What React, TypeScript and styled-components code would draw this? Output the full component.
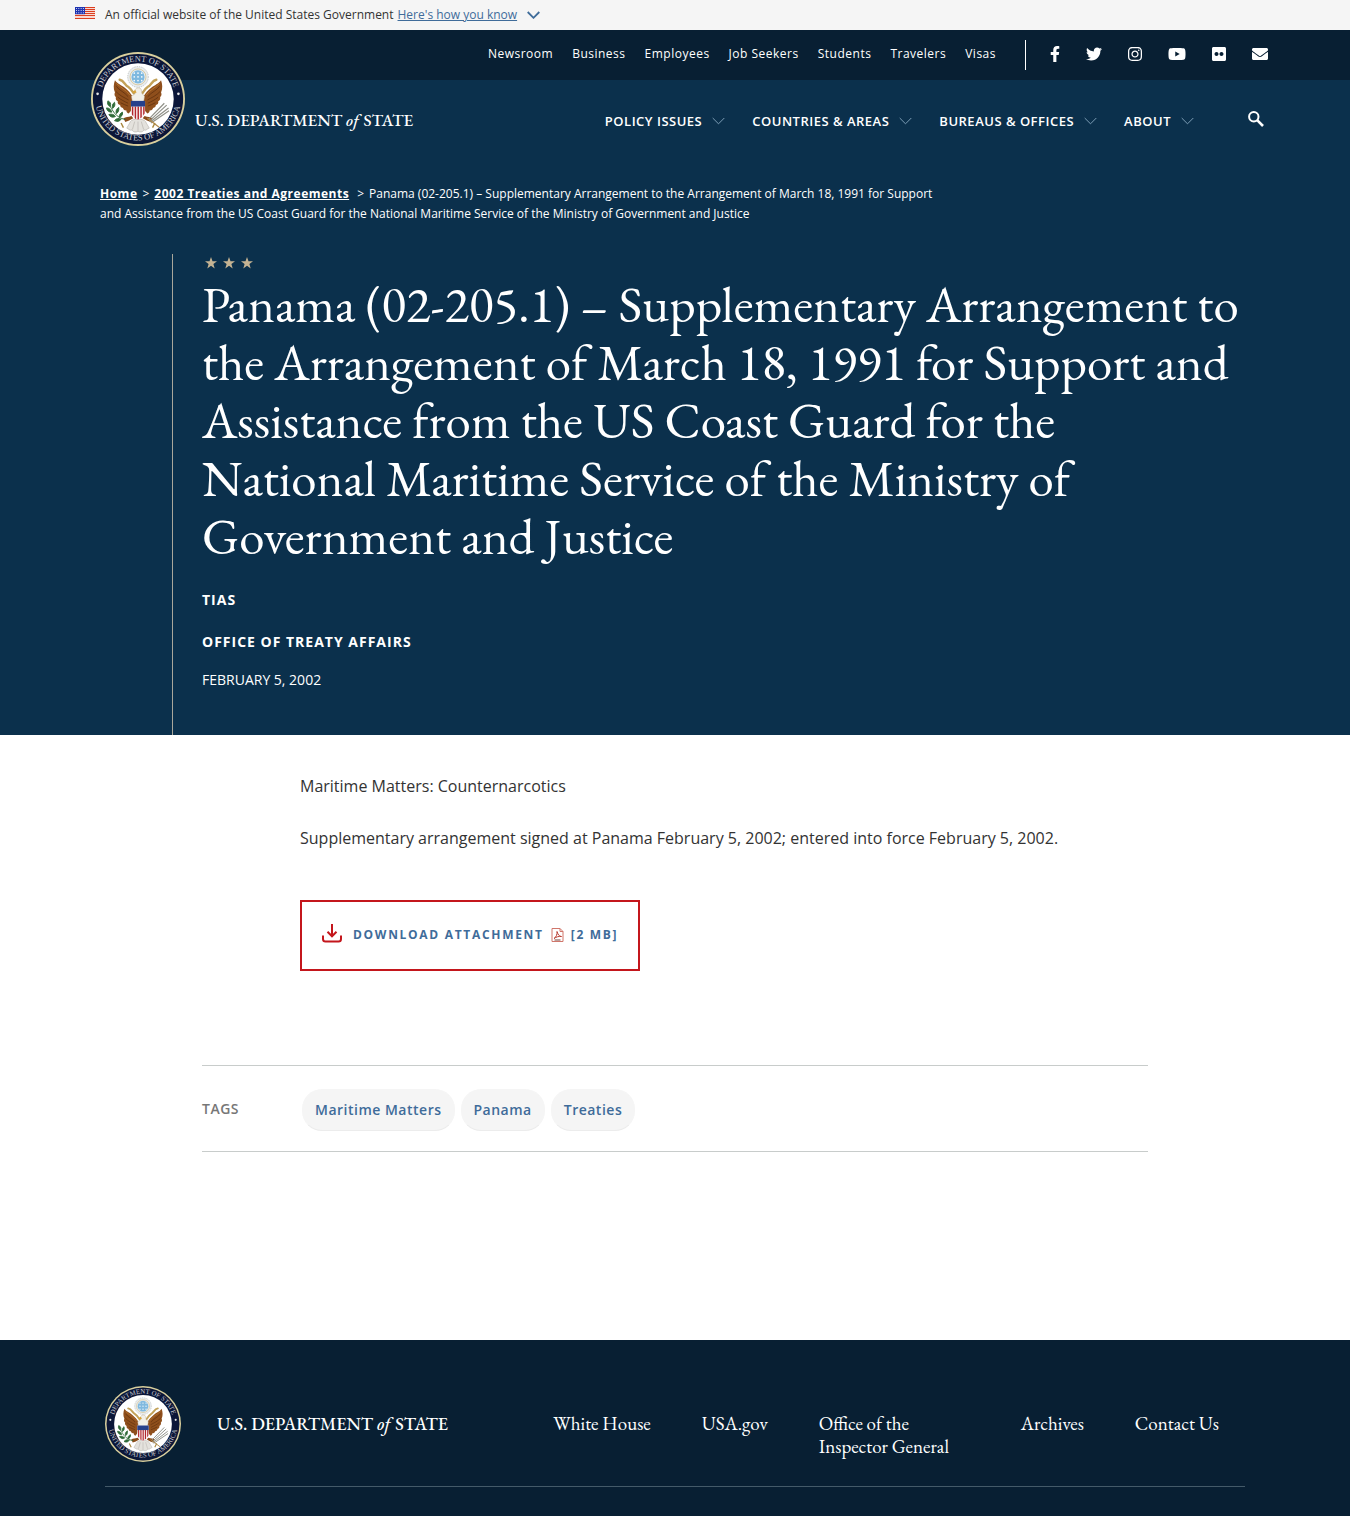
import React from "react";
import styled, { createGlobalStyle } from "styled-components";
import { FaEnvelope, FaFacebookF, FaFlickr, FaInstagram, FaTwitter, FaYoutube } from "react-icons/fa";

const sans = `"Open Sans", "Noto Sans", sans-serif`;
const serif = `"EB Garamond", "Liberation Serif", serif`;
const navy = "#081f33";
const blue = "#0b304c";
const link = "#3f6c9a";
const red = "#c4161c";

const GlobalStyle = createGlobalStyle`
  *, *::before, *::after { box-sizing: border-box; }
  body {
    margin: 0;
    background: #fff;
    color: #333;
    font-family: ${sans};
    font-size: 16px;
  }
  a { color: inherit; text-decoration: none; }
  button { font: inherit; color: inherit; background: none; border: 0; padding: 0; cursor: pointer; }
  ul, ol { list-style: none; margin: 0; padding: 0; }
  svg { display: block; flex-shrink: 0; }
`;

const Container = styled.div<{ $max: number }>`
  width: 100%;
  max-width: ${(p) => p.$max}px;
  margin: 0 auto;
`;

const Banner = styled.div`
  background: #f5f5f5;
`;

const BannerRow = styled(Container)`
  display: flex;
  align-items: center;
  min-height: 30px;
  gap: 10px;
  font-size: 12px;
  line-height: 30px;
`;

const FlagBox = styled.span`
  padding-bottom: 4px;
`;

const BannerButton = styled.button`
  display: inline-flex;
  align-items: center;
  gap: 10px;
  margin-left: -6px;
  color: ${link};

  span { text-decoration: underline; }
`;

const Header = styled.header`
  background: linear-gradient(${navy} 50px, ${blue} 50px);
  color: #fff;
`;

const HeaderRow = styled(Container)`
  display: flex;
  justify-content: space-between;
  min-height: 140px;
  padding: 0 7px 0 16px;
`;

const Brand = styled.a`
  display: flex;
  align-items: flex-start;
  gap: 10px;
  padding-top: 22px;
`;

const BrandName = styled.span<{ $size: number; $top: number }>`
  padding-top: ${(p) => p.$top}px;
  font-family: ${serif};
  font-size: ${(p) => p.$size}px;
  font-weight: 500;
  line-height: 22px;
  white-space: nowrap;

  em { margin-right: 1px; }
`;

const Navs = styled.div`
  display: flex;
  flex-direction: column;
  align-items: flex-end;
`;

const UtilityBar = styled.div`
  display: flex;
  align-items: center;
  height: 50px;
`;

const UtilityNav = styled.ul`
  display: flex;
  gap: 19px;
  padding: 0 29px 3px 0;
  font-size: 12px;
  letter-spacing: 0.5px;
`;

const Social = styled.ul`
  display: flex;
  align-items: center;
  gap: 26px;
  height: 30px;
  padding-left: 24px;
  border-left: 1px solid #fff;
`;

const SocialItem = styled.li<{ $width: number }>`
  padding-bottom: 2px;

  svg {
    width: ${(p) => p.$width}px;
    height: 16px;
  }
`;

const MainNav = styled.nav`
  display: flex;
  align-items: center;
  gap: 27px;
  height: 81px;
`;

const NavButton = styled.button`
  display: flex;
  align-items: center;
  gap: 10px;
  font-size: 13px;
  font-weight: 600;
  letter-spacing: 0.5px;
  text-transform: uppercase;
  white-space: nowrap;
`;

const SearchButton = styled.button`
  margin: 0 4px 4px 27px;
`;

const Hero = styled.section`
  background: ${blue};
  color: #fff;
`;

const Breadcrumb = styled.nav`
  max-width: 890px;
  padding: 14px 25px 30px;
  font-size: 12px;
  line-height: 20px;

  ol, li { display: inline; }
  li + li::before { content: ">"; margin: 0 5px; }
  li:last-child::before { margin-left: 8px; }
  a { font-weight: 700; letter-spacing: 0.5px; text-decoration: underline; }
`;

const HeroBody = styled.div`
  margin-left: 97px;
  padding: 3px 30px 42px 29px;
  border-left: 1px solid #a9a79b;
`;

const Stars = styled.div`
  display: flex;
  gap: 6px;
  padding-left: 3px;
`;

const Title = styled.h1`
  margin: 6px 0 22px;
  font-family: ${serif};
  font-size: 51px;
  font-weight: 400;
  line-height: 58px;
`;

const Meta = styled.p<{ $strong?: boolean; $gap: number }>`
  margin: 0 0 ${(p) => p.$gap}px;
  font-size: 14px;
  line-height: 26px;
  font-weight: ${(p) => (p.$strong ? 700 : 400)};
  letter-spacing: ${(p) => (p.$strong ? "1px" : "normal")};
  text-transform: uppercase;
`;

const Content = styled(Container)`
  padding: 38px 0 0 98px;
`;

const Paragraph = styled.p`
  margin: 0 0 26px;
  line-height: 26px;
`;

const Download = styled.a`
  display: inline-flex;
  align-items: center;
  gap: 11px;
  min-height: 71px;
  margin: 23px 0 94px;
  padding: 0 20px;
  border: 2px solid ${red};
  color: ${link};
  font-size: 12px;
  font-weight: 700;
  letter-spacing: 1.7px;
  text-transform: uppercase;

  > svg { margin-bottom: 4px; }
`;

const DownloadText = styled.span`
  display: flex;
  align-items: center;
  gap: 7px;
  padding-bottom: 2px;
`;

const Tags = styled(Container)`
  display: flex;
  align-items: center;
  padding: 23px 0 20px;
  margin-bottom: 188px;
  border-top: 1px solid #c8cccb;
  border-bottom: 1px solid #c8cccb;
  font-size: 14px;
  font-weight: 600;
  letter-spacing: 0.5px;
`;

const TagsLabel = styled.h2`
  width: 100px;
  margin: 0;
  padding-bottom: 3px;
  color: #777;
  font-size: inherit;
  font-weight: inherit;
  text-transform: uppercase;
`;

const TagList = styled.ul`
  display: flex;
  flex-wrap: wrap;
  gap: 6px;
`;

const Tag = styled.a`
  display: block;
  padding: 0 12px;
  border-radius: 20px;
  border: 1px solid #f5f5f5;
  border-bottom-color: #ececec;
  background: #f5f5f5;
  color: ${link};
  line-height: 40px;
`;

const Footer = styled.footer`
  background: ${navy};
  color: #fff;
  padding: 46px 0 29px;
`;

const FooterRow = styled(Container)`
  display: flex;
  justify-content: space-between;
  padding: 0 26px 24px 0;
  border-bottom: 1px solid #445a69;
`;

const FooterBrand = styled(Brand)`
  padding: 0;
  gap: 36px;
`;

const FooterLinks = styled.ul`
  display: flex;
  gap: 51px;
  padding-top: 26px;
  font-family: ${serif};
  font-size: 19px;
  line-height: 23px;

  li { max-width: 151px; }
`;

const Chevron = ({ color, stroke }: { color: string; stroke: number }) => (
  <svg width="13" height="8" viewBox="0 0 13 8" fill="none" stroke={color} strokeWidth={stroke} aria-hidden="true">
    <path d="M.7 1l5.8 5.8L12.300 1" />
  </svg>
);

const SearchIcon = () => (
  <svg width="16" height="16" viewBox="0 0 16 16" fill="none" stroke="#fff" aria-hidden="true">
    <circle cx="5.800" cy="5.800" r="4.700" strokeWidth="2" />
    <path d="M9.200 9.200l5.800 5.800" strokeWidth="2.600" />
  </svg>
);

const Flag = () => (
  <svg width="20" height="12" viewBox="0 0 20 12" aria-hidden="true">
    <rect width="20" height="12" fill="#fff" />
    {[0, 2, 4, 6, 8, 10.8].map((y) => (
      <rect key={y} y={y} width="20" height="1.2" fill="#db3e1f" />
    ))}
    <rect width="10" height="7.200" fill="#1e33b1" />
    {[1.5, 3.6, 5.7].map((y) =>
      [1.5, 3.8, 6.1, 8.4].map((x) => <circle key={`${x}-${y}`} cx={x} cy={y} r=".5" fill="#fff" />)
    )}
  </svg>
);

const Star = () => (
  <svg width="12" height="12" viewBox="0 0 12 12" fill="#c5b393" aria-hidden="true">
    <path d="M6 0l1.500 4.300H12L8.400 7l1.300 4.500L6 8.800l-3.700 2.700L3.600 7 0 4.300h4.500z" />
  </svg>
);

const Wing = () => (
  <g>
    <path
      d="M51 60c5 8 14 10 21 16 7 6 12 11 16 18l2 16c-1 8-4 15-10 21-3-1-5-4-5-7-3 1-6-1-7-5-4 0-6-3-6-6-4-1-6-4-5-8-4-2-5-5-4-9-3-3-4-6-2-10-4-8-3-18 0-26z"
      fill="#8f4f1c"
    />
    <path d="M54 73c6 9 17 12 25 22M53 84c8 9 18 13 27 18M57 96c7 6 14 9 22 13M63 108c6 3 10 5 16 7" stroke="#5d2f0e" strokeWidth="1.600" fill="none" />
    <path d="M54 67c8 8 20 13 29 25" stroke="#b9772f" strokeWidth="2" fill="none" />
  </g>
);

const Seal = ({ size, id }: { size: number; id: string }) => (
  <svg width={size} height={size} viewBox="0 0 200 200" role="img" aria-label="Seal of the Department of State">
    <defs>
      <path id={`${id}-top`} d="M20 100a80 80 0 0 1 160 0" />
      <path id={`${id}-bottom`} d="M8 92v4a92 92 0 0 0 184 0v-4" />
    </defs>
    <circle cx="100" cy="100" r="100" fill="#d9cf9d" />
    <circle cx="100" cy="100" r="96" fill="#0b1638" />
    <circle cx="100" cy="100" r="76" fill="#fff" />
    <g fill="#c9cbd0" fontFamily="Liberation Serif, serif" fontSize="18" textAnchor="middle">
      <text>
        <textPath href={`#${id}-top`} startOffset="50%">DEPARTMENT OF STATE</textPath>
      </text>
      <text>
        <textPath href={`#${id}-bottom`} startOffset="50%">UNITED STATES OF AMERICA</textPath>
      </text>
    </g>
    <circle cx="14" cy="89" r="2.800" fill="#e6e6e6" />
    <circle cx="186" cy="89" r="2.800" fill="#e6e6e6" />
    <Wing />
    <g transform="matrix(-1 0 0 1 200 0)">
      <Wing />
    </g>
    <g stroke="#c3a259" strokeWidth="5" fill="none" strokeLinecap="round">
      <path d="M61 59c10 2 10 11 18 15 5 3 8 8 12 14" />
      <path d="M139 59c-10 2-10 11-18 15-5 3-8 8-12 14" />
    </g>
    <circle cx="100" cy="53" r="22" fill="#e9ecef" stroke="#b4b8b2" strokeWidth="1.500" strokeDasharray="3 2" />
    <circle cx="100" cy="53" r="17" fill="none" stroke="#d2bf84" strokeWidth="1.500" />
    <circle cx="100" cy="53" r="14" fill="#7fb9df" />
    <g fill="#fff">
      {[45, 53, 61].map((y) => [92, 100, 108].map((x) => <circle key={`${x}-${y}`} cx={x} cy={y} r="1.700" />))}
    </g>
    <path d="M94 80c3-5 11-5 13 0l1 8 6 6-2 12H88l-2-12 8-5z" fill="#f1efe8" stroke="#b7a78b" />
    <path d="M94 81l-7 4 5 3 5-2z" fill="#d7a33a" />
    <path d="M86 136c-7 3-12 1-17 5l4 8 8-3 9-5zM114 136c7 3 12 1 17 5l-4 8-8-3-9-5z" fill="#8a4c1b" />
    <path d="M84 148c4-7 28-7 32 0l8 14c-5 1-6 6-11 4-4 5-8 5-13 3-5 2-9 2-13-3-5 2-7-3-11-4z" fill="#e4e2dd" stroke="#a5a09a" />
    <path d="M100 148v20M93 148l-5 17M107 148l5 17" stroke="#a5a09a" fill="none" />
    <path d="M85 104h30v23c0 9-8 14-15 17-7-3-15-8-15-17z" fill="#f7eeee" />
    <path d="M87 116v17l3 4v-21zM93 116v25l3 2v-27zM99 116v28l3-1v-27zM105 116v25l3-2v-23zM111 116v19l3-4v-15z" fill="#b3262c" />
    <path d="M85 104h30v12H85z" fill="#26408b" />
    <g stroke="#2f6b38" strokeWidth="2" fill="#2f6b38">
      <path d="M38 111c8 12 12 28 36 33" fill="none" />
      <path d="M36 104c5 2 7 6 5 12-5-2-7-6-5-12zM50 107c2 6 0 10-4 13-2-5 0-10 4-13zM33 119c6 0 10 4 11 9-6 0-10-3-11-9zM59 118c1 6-1 11-5 13-2-5 0-10 5-13zM38 133c6-2 11 0 14 4-5 3-11 2-14-4zM67 128c1 6-2 10-7 11 0-5 2-9 7-11zM50 146c4-5 9-6 14-3-3 5-9 6-14 3z" />
    </g>
    <g stroke="#8f9088" strokeWidth="2.500" fill="none">
      <path d="M124 147l37-34M126 149l39-30M128 151l38-26M123 143l33-34" />
      <path d="M120 141l25 19" stroke="#b08a4a" />
    </g>
    <path d="M64 151l5 10M136 151l-5 10" stroke="#a8863f" strokeWidth="3" />
  </svg>
);

const DownloadIcon = () => (
  <svg width="20" height="19" viewBox="0 0 20 19" fill="none" stroke={red} strokeWidth="2" aria-hidden="true">
    <path d="M10 0v12M5.500 7.800L10 12.300l4.500-4.500M1 11.500v3.500q0 2.500 2.500 2.500h13q2.500 0 2.500-2.500v-3.500" />
  </svg>
);

const PdfIcon = () => (
  <svg width="13" height="14" viewBox="0 0 13 14" fill="none" stroke="#d0766b" aria-hidden="true">
    <path d="M1 .5h8l3 3v10H1zM9 .5v3h3" />
    <path d="M3 10.500C5 9.500 6.500 6 6 3.500c1 3 2 5 4.500 5C8 8 5 9 3 10.500z" stroke="#b93b30" />
    <path d="M3.500 12h6" stroke="#7b4038" />
  </svg>
);

const utilityLinks = ["Newsroom", "Business", "Employees", "Job Seekers", "Students", "Travelers", "Visas"];
const mainLinks = ["Policy Issues", "Countries & Areas", "Bureaus & Offices", "About"];
const socialLinks = [
  { label: "Facebook", Icon: FaFacebookF, width: 10 },
  { label: "Twitter", Icon: FaTwitter, width: 16 },
  { label: "Instagram", Icon: FaInstagram, width: 14 },
  { label: "YouTube", Icon: FaYoutube, width: 18 },
  { label: "Flickr", Icon: FaFlickr, width: 14 },
  { label: "Email", Icon: FaEnvelope, width: 16 },
];
const tags = ["Maritime Matters", "Panama", "Treaties"];
const footerLinks = ["White House", "USA.gov", "Office of the Inspector General", "Archives", "Contact Us"];

// The name of the service stays on one line.
const title =
  "Panama (02-205.1) – Supplementary Arrangement to the Arrangement of March 18, 1991 for Support and Assistance from the US Coast Guard for the National\u00a0Maritime\u00a0Service of the Ministry of Government and Justice";

export default function App() {
  return (
    <>
      <GlobalStyle />
      <Banner>
        <BannerRow $max={1200}>
          <FlagBox>
            <Flag />
          </FlagBox>
          <span>An official website of the United States Government</span>
          <BannerButton type="button">
            <span>Here's how you know</span>
            <Chevron color={link} stroke={1.8} />
          </BannerButton>
        </BannerRow>
      </Banner>

      <Header>
        <HeaderRow $max={1200}>
          <Brand href="#">
            <Seal size={94} id="header-seal" />
            <BrandName $size={17} $top={57}>
              U.S. DEPARTMENT <em>of</em> STATE
            </BrandName>
          </Brand>
          <Navs>
            <UtilityBar>
              <UtilityNav>
                {utilityLinks.map((l) => (
                  <li key={l}>
                    <a href="#">{l}</a>
                  </li>
                ))}
              </UtilityNav>
              <Social>
                {socialLinks.map(({ label, Icon, width }) => (
                  <SocialItem key={label} $width={width}>
                    <a href="#" aria-label={label}>
                      <Icon />
                    </a>
                  </SocialItem>
                ))}
              </Social>
            </UtilityBar>
            <MainNav aria-label="Main">
              {mainLinks.map((l) => (
                <NavButton type="button" key={l}>
                  {l}
                  <Chevron color="#7d9db5" stroke={1} />
                </NavButton>
              ))}
              <SearchButton type="button" aria-label="Search">
                <SearchIcon />
              </SearchButton>
            </MainNav>
          </Navs>
        </HeaderRow>
      </Header>

      <main>
        <Hero>
          <Container $max={1200}>
            <Breadcrumb aria-label="Breadcrumb">
              <ol>
                <li>
                  <a href="#">Home</a>
                </li>
                <li>
                  <a href="#">2002 Treaties and Agreements</a>
                </li>
                <li>{title}</li>
              </ol>
            </Breadcrumb>
            <HeroBody>
              <Stars>
                <Star />
                <Star />
                <Star />
              </Stars>
              <Title>{title}</Title>
              <Meta $strong $gap={16}>
                TIAS
              </Meta>
              <Meta $strong $gap={12}>
                Office of Treaty Affairs
              </Meta>
              <Meta $gap={0}>February 5, 2002</Meta>
            </HeroBody>
          </Container>
        </Hero>

        <Content $max={946}>
          <Paragraph>Maritime Matters: Counternarcotics</Paragraph>
          <Paragraph>
            Supplementary arrangement signed at Panama February 5, 2002; entered into force February 5, 2002.
          </Paragraph>
          <Download href="#">
            <DownloadIcon />
            <DownloadText>
              Download Attachment
              <PdfIcon />
              [2 MB]
            </DownloadText>
          </Download>
        </Content>

        <Tags $max={946}>
          <TagsLabel>Tags</TagsLabel>
          <TagList>
            {tags.map((t) => (
              <li key={t}>
                <Tag href="#">{t}</Tag>
              </li>
            ))}
          </TagList>
        </Tags>
      </main>

      <Footer>
        <FooterRow $max={1140}>
          <FooterBrand href="#">
            <Seal size={76} id="footer-seal" />
            <BrandName $size={18} $top={27}>
              U.S. DEPARTMENT <em>of</em> STATE
            </BrandName>
          </FooterBrand>
          <FooterLinks>
            {footerLinks.map((l) => (
              <li key={l}>
                <a href="#">{l}</a>
              </li>
            ))}
          </FooterLinks>
        </FooterRow>
      </Footer>
    </>
  );
}
